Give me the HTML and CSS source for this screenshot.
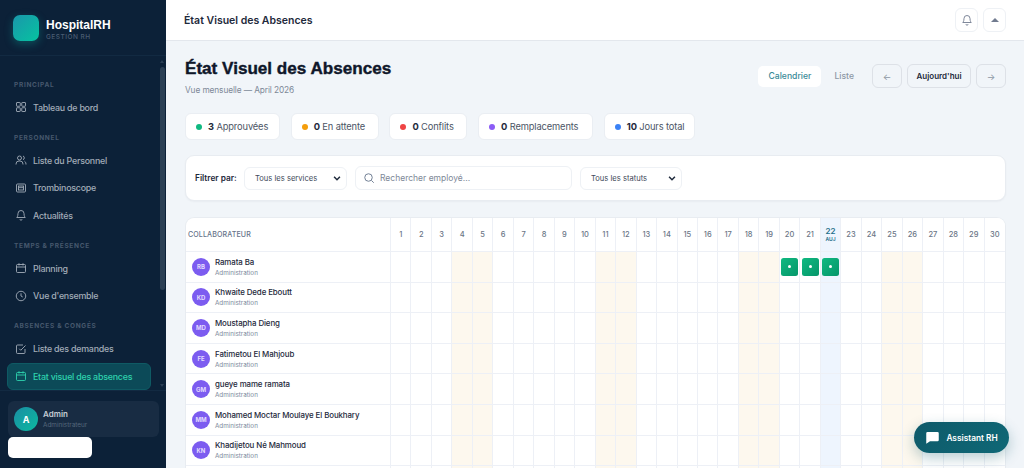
FILE: index.html
```html
<!DOCTYPE html>
<html lang="fr">

<head>
    <meta charset="UTF-8">
    <meta name="viewport" content="width=device-width, initial-scale=1.0">
    <title>État Visuel des Absences</title>
    <link rel="stylesheet" href="styles.css">
</head>

<body>
    <aside class="sidebar">
        <div class="brand">
            <div class="brand-logo"></div>
            <div class="brand-text">
                <div class="brand-name">HospitalRH</div>
                <div class="brand-sub">GESTION RH</div>
            </div>
        </div>

        <nav class="nav">
            <div class="nav-label">PRINCIPAL</div>
            <a class="nav-item">
                <svg class="nav-icon" viewBox="0 0 24 24"><rect x="3" y="3" width="7.5" height="7.5" rx="1"/><rect x="13.5" y="3" width="7.5" height="7.5" rx="1"/><rect x="3" y="13.5" width="7.5" height="7.5" rx="1"/><rect x="13.5" y="13.5" width="7.5" height="7.5" rx="1"/></svg>
                Tableau de bord
            </a>

            <div class="nav-label">PERSONNEL</div>
            <a class="nav-item">
                <svg class="nav-icon" viewBox="0 0 24 24"><circle cx="9" cy="8" r="4"/><path d="M2 21v-1a6 6 0 0 1 6-6h2a6 6 0 0 1 6 6v1"/><path d="M16 4a4 4 0 0 1 0 7.5"/><path d="M19 14.5a6 6 0 0 1 3 5.500V21"/></svg>
                Liste du Personnel
            </a>
            <a class="nav-item">
                <svg class="nav-icon" viewBox="0 0 24 24"><rect x="3" y="4" width="18" height="16" rx="2"/><rect x="7" y="8" width="10" height="8"/><circle cx="10" cy="11" r="1"/><circle cx="14" cy="11" r="1"/></svg>
                Trombinoscope
            </a>
            <a class="nav-item">
                <svg class="nav-icon" viewBox="0 0 24 24"><path d="M6 9a6 6 0 0 1 12 0c0 6 2.500 8 2.500 8h-17S6 15 6 9"/><path d="M10 20.500a2 2 0 0 0 4 0"/></svg>
                Actualités
            </a>

            <div class="nav-label">TEMPS &amp; PRÉSENCE</div>
            <a class="nav-item">
                <svg class="nav-icon" viewBox="0 0 24 24"><rect x="3" y="5" width="18" height="16" rx="2"/><path d="M3 10h18M8 2.500V7M16 2.500V7"/></svg>
                Planning
            </a>
            <a class="nav-item">
                <svg class="nav-icon" viewBox="0 0 24 24"><circle cx="12" cy="12" r="9.500"/><path d="M12 6.500V12l3.500 2"/></svg>
                Vue d'ensemble
            </a>

            <div class="nav-label">ABSENCES &amp; CONGÉS</div>
            <a class="nav-item">
                <svg class="nav-icon" viewBox="0 0 24 24"><path d="M20 12v7a2 2 0 0 1-2 2H5a2 2 0 0 1-2-2V6a2 2 0 0 1 2-2h11"/><path d="M8.500 11.500l3 3L21 5"/></svg>
                Liste des demandes
            </a>
            <a class="nav-item active">
                <svg class="nav-icon" viewBox="0 0 24 24"><rect x="3" y="5" width="18" height="16" rx="2"/><path d="M3 10h18M8 2.500V7M16 2.500V7"/></svg>
                Etat visuel des absences
            </a>

            <div class="scroll-up"></div>
            <div class="scroll-thumb"></div>
            <div class="scroll-down"></div>
        </nav>

        <div class="sidebar-foot">
            <div class="user-card">
                <div class="user-avatar">A</div>
                <div>
                    <div class="user-name">Admin</div>
                    <div class="user-role">Administrateur</div>
                </div>
            </div>
            <div class="white-pill"></div>
        </div>
    </aside>

    <div class="main">
        <header class="topbar">
            <div class="topbar-title">État Visuel des Absences</div>
            <div class="topbar-actions">
                <button class="icon-btn">
                    <svg viewBox="0 0 24 24"><path d="M6 9a6 6 0 0 1 12 0c0 6 2.500 8 2.500 8h-17S6 15 6 9"/><path d="M10 20.500a2 2 0 0 0 4 0"/></svg>
                </button>
                <button class="icon-btn"><span class="caret-up"></span></button>
            </div>
        </header>

        <main class="content">
            <div class="page-head">
                <div>
                    <h1 class="page-title">État Visuel des Absences</h1>
                    <div class="page-sub">Vue mensuelle — April 2026</div>
                </div>
                <div class="page-tools">
                    <div class="view-toggle">
                        <span class="view-tab active">Calendrier</span>
                        <span class="view-tab">Liste</span>
                    </div>
                    <div class="month-nav">
                        <button class="nav-btn arrow">←</button>
                        <button class="nav-btn today">Aujourd'hui</button>
                        <button class="nav-btn arrow">→</button>
                    </div>
                </div>
            </div>

            <div class="stats">
                <div class="stat"><span class="dot green"></span><b>3</b> Approuvées</div>
                <div class="stat"><span class="dot orange"></span><b>0</b> En attente</div>
                <div class="stat"><span class="dot red"></span><b>0</b> Conflits</div>
                <div class="stat"><span class="dot purple"></span><b>0</b> Remplacements</div>
                <div class="stat"><span class="dot blue"></span><b>10</b> Jours total</div>
            </div>

            <div class="filters">
                <span class="filter-label">Filtrer par:</span>
                <div class="select services">Tous les services<svg viewBox="0 0 12 12"><path d="M2.500 4.500L6 8l3.500-3.500"/></svg></div>
                <div class="search">
                    <svg viewBox="0 0 24 24"><circle cx="11" cy="11" r="7.500"/><path d="M17 17l4.500 4.500"/></svg>
                    Rechercher employé...
                </div>
                <div class="select statuts">Tous les statuts<svg viewBox="0 0 12 12"><path d="M2.500 4.500L6 8l3.500-3.500"/></svg></div>
            </div>

            <div class="calendar" id="calendar"></div>
        </main>
    </div>

    <button class="assistant">
        <svg viewBox="0 0 24 24"><path d="M4 3h16a2 2 0 0 1 2 2v11a2 2 0 0 1-2 2H8l-6 4V5a2 2 0 0 1 2-2z"/></svg>
        Assistant RH
    </button>

    <script src="app.js"></script>
</body>

</html>
```

FILE: styles.css
```css
* {
    box-sizing: border-box;
}

body {
    margin: 0;
    height: 100vh;
    display: flex;
    overflow: hidden;
    background: #f1f5f9;
    font-family: "Inter", "Noto Sans", sans-serif;
    color: #0f172a;
}

/* sidebar */
.sidebar {
    width: 166px;
    flex-shrink: 0;
    display: flex;
    flex-direction: column;
    background: #0c2138;
}

.brand {
    height: 56px;
    flex-shrink: 0;
    display: flex;
    align-items: center;
    gap: 7px;
    padding: 0 13px;
    border-bottom: 1px solid #122a42;
}

.brand-logo {
    width: 26px;
    height: 26px;
    border-radius: 7px;
    background: linear-gradient(135deg, #1a97ab, #06c3a0);
    box-shadow: 0 3px 9px rgba(13, 170, 160, 0.35);
}

.brand-text {
    padding-top: 3px;
}

.brand-name {
    font-family: "Liberation Sans", sans-serif;
    font-size: 12px;
    font-weight: 700;
    line-height: 15px;
    color: #fff;
}

.brand-sub {
    font-size: 6.500px;
    line-height: 8px;
    letter-spacing: 0.5px;
    color: #4a5d72;
    font-weight: 500;
}

.nav {
    position: relative;
    flex: 1;
    min-height: 0;
    padding: 12px 15px 0 7px;
}

.nav-label {
    height: 17px;
    margin: 8.500px 0 0 7px;
    font-size: 6.500px;
    line-height: 17px;
    font-weight: 700;
    letter-spacing: 0.7px;
    white-space: nowrap;
    color: #46586d;
}

.nav-item {
    height: 27.500px;
    display: flex;
    align-items: center;
    gap: 6px;
    padding: 0 0 0 8px;
    border-radius: 6px;
    font-size: 8.900px;
    letter-spacing: -0.24px;
    font-weight: 500;
    white-space: nowrap;
    color: #a3adb9;
}

.nav-item.active {
    background: #0c4a58;
    border: 1px solid #0f5a64;
    padding-left: 7px;
    color: #2ed3ae;
}

.nav-icon {
    width: 12px;
    height: 12px;
    flex-shrink: 0;
    fill: none;
    stroke: currentColor;
    stroke-width: 1.800;
}

.scroll-thumb {
    position: absolute;
    left: 160px;
    top: 11px;
    width: 5px;
    height: 223px;
    border-radius: 3px;
    background: #2b3f54;
}

.scroll-up,
.scroll-down {
    position: absolute;
    left: 160px;
    border-left: 2.500px solid transparent;
    border-right: 2.500px solid transparent;
}

.scroll-up {
    top: 4px;
    border-bottom: 3px solid #2b3f54;
}

.scroll-down {
    bottom: 3px;
    border-top: 3px solid #2b3f54;
}

.sidebar-foot {
    height: 78px;
    flex-shrink: 0;
    padding: 10px 7px 0 8px;
    border-top: 1px solid #122a42;
}

.user-card {
    height: 36px;
    display: flex;
    align-items: center;
    gap: 5px;
    padding-left: 6px;
    border-radius: 6px;
    background: #182c43;
}

.user-avatar {
    width: 24px;
    height: 24px;
    display: flex;
    align-items: center;
    justify-content: center;
    border-radius: 50%;
    background: linear-gradient(135deg, #1a8ea3, #0cb9a0);
    color: #fff;
    font-size: 9px;
    font-weight: 700;
}

.user-name {
    font-size: 8px;
    line-height: 12px;
    font-weight: 600;
    color: #c4ccd5;
}

.user-role {
    font-size: 6.400px;
    line-height: 10px;
    color: #55677b;
}

.white-pill {
    width: 84px;
    height: 21px;
    border-radius: 5px;
    background: #fff;
}

/* main column */
.main {
    flex: 1;
    min-width: 0;
    display: flex;
    flex-direction: column;
    overflow: hidden;
}

.topbar {
    height: 41px;
    flex-shrink: 0;
    display: flex;
    align-items: center;
    justify-content: space-between;
    padding: 0 18px;
    background: #fff;
    border-bottom: 1px solid #e3e7ed;
}

.topbar-title {
    font-size: 10.500px;
    font-weight: 600;
    color: #1e293b;
}

.topbar-actions {
    display: flex;
    gap: 5px;
}

.icon-btn {
    width: 23px;
    height: 24px;
    display: flex;
    align-items: center;
    justify-content: center;
    padding: 0;
    border: 1px solid #eef1f5;
    border-radius: 6px;
    background: #fff;
}

.icon-btn svg {
    width: 12px;
    height: 12px;
    fill: none;
    stroke: #717b8f;
    stroke-width: 1.800;
}

.caret-up {
    border-left: 4px solid transparent;
    border-right: 4px solid transparent;
    border-bottom: 4px solid #717b8f;
}

.content {
    flex: 1;
    min-height: 0;
    overflow: hidden;
    padding: 18px 18px 0 19px;
}

.page-head {
    height: 54px;
    display: flex;
    justify-content: space-between;
    align-items: flex-start;
}

.page-title {
    margin: 0;
    font-family: "Liberation Sans", sans-serif;
    font-size: 17.100px;
    line-height: 20px;
    font-weight: 700;
    -webkit-text-stroke: 0.4px #0f172a;
}

.page-sub {
    margin-top: 5px;
    font-size: 8.300px;
    letter-spacing: -0.1px;
    line-height: 12px;
    color: #7d8897;
}

.page-tools {
    display: flex;
    align-items: center;
    gap: 9px;
    padding-top: 5px;
}

.view-toggle {
    display: flex;
    gap: 4px;
}

.view-tab {
    height: 21px;
    display: flex;
    align-items: center;
    padding: 0 9px;
    border-radius: 5px;
    font-size: 8.600px;
    font-weight: 500;
    color: #8d97a5;
}

.view-tab.active {
    width: 63px;
    justify-content: center;
    padding: 0;
    background: #fff;
    color: #3a8a98;
}

.month-nav {
    display: flex;
    gap: 5px;
}

.nav-btn {
    height: 24px;
    padding: 0;
    border: 1px solid #dde1e7;
    border-radius: 6px;
    background: #f1f5f9;
    font-family: inherit;
}

.nav-btn.arrow {
    width: 30px;
    font-size: 9px;
    color: #8c95a3;
}

.nav-btn.today {
    width: 64px;
    font-size: 8px;
    font-weight: 600;
    color: #1e293b;
}

.stats {
    display: grid;
    grid-template-columns: 95px 88px 78px 115px 91px;
    gap: 10.700px;
}

.stat {
    height: 27px;
    display: flex;
    align-items: center;
    padding: 0 10px;
    border: 1px solid #eaeef3;
    border-radius: 6px;
    background: #fff;
    font-size: 9.300px;
    letter-spacing: -0.12px;
    color: #4b5565;
    white-space: pre;
}

.stat b {
    font-weight: 700;
    color: #1e293b;
}

.dot {
    width: 6px;
    height: 6px;
    margin-right: 6px;
    flex-shrink: 0;
    border-radius: 50%;
}

.green { background: #10b981; }
.orange { background: #f59e0b; }
.red { background: #ef4444; }
.purple { background: #8b5cf6; }
.blue { background: #3b82f6; }

.filters {
    height: 46px;
    margin-top: 15px;
    display: flex;
    align-items: center;
    padding: 0 9px;
    border: 1px solid #e8ecf1;
    border-radius: 9px;
    background: #fff;
    box-shadow: 0 1px 2px rgba(15, 23, 42, 0.04);
}

.filter-label {
    width: 49px;
    font-size: 8.300px;
    font-weight: 600;
    color: #1e293b;
}

.select {
    height: 23px;
    display: flex;
    align-items: center;
    justify-content: space-between;
    padding: 0 4px 0 10px;
    border: 1px solid #eef1f5;
    border-radius: 6px;
    font-size: 7.600px;
    color: #3f4a5a;
}

.select svg {
    width: 10px;
    height: 10px;
    fill: none;
    stroke: #1e293b;
    stroke-width: 1.800;
}

.services {
    width: 103px;
}

.statuts {
    width: 102px;
}

.search {
    width: 217px;
    height: 24px;
    margin: 0 8px;
    display: flex;
    align-items: center;
    gap: 5px;
    padding-left: 7px;
    border: 1px solid #eef1f5;
    border-radius: 6px;
    font-size: 8.500px;
    color: #7d8897;
}

.search svg {
    width: 12px;
    height: 12px;
    fill: none;
    stroke: #64748b;
    stroke-width: 1.800;
}

/* calendar */
.calendar {
    margin-top: 16px;
    display: grid;
    grid-template-columns: 205px repeat(30, 1fr);
    grid-template-rows: 34px;
    grid-auto-rows: 30.600px;
    border: 1px solid #e8ecf1;
    border-bottom: 0;
    border-radius: 9px 9px 0 0;
    background: #fff;
    overflow: hidden;
}

.cell {
    display: flex;
    align-items: center;
    justify-content: center;
    border-right: 1px solid #edf0f6;
    border-bottom: 1px solid #edf0f6;
}

.cell:nth-child(31n) {
    border-right: 0;
}

.cell.weekend {
    background: #fdf8ee;
}

.cell.today {
    background: #eef5fe;
}

.head-name {
    justify-content: flex-start;
    padding-left: 2px;
    font-size: 7.100px;
    font-weight: 500;
    letter-spacing: 0.1px;
    color: #66738a;
}

.head-day {
    flex-direction: column;
    font-size: 7.500px;
    font-weight: 500;
    color: #6b7686;
    background: #fff;
}

.head-day.today {
    color: #1f6f8b;
    font-weight: 600;
    font-size: 8px;
}

.head-day small {
    font-size: 5px;
    line-height: 7px;
}

.person {
    justify-content: flex-start;
    gap: 5px;
    padding-left: 6px;
}

.avatar {
    width: 18px;
    height: 18px;
    flex-shrink: 0;
    display: flex;
    align-items: center;
    justify-content: center;
    border-radius: 50%;
    background: #7c5cf0;
    color: #e4dcfd;
    font-size: 6px;
    font-weight: 700;
}

.person-name {
    font-size: 7.900px;
    letter-spacing: -0.1px;
    line-height: 12px;
    font-weight: 500;
    white-space: nowrap;
    color: #1e293b;
}

.person-dept {
    margin-top: 1px;
    font-size: 6.300px;
    line-height: 9px;
    color: #7d8a9c;
}

.leave {
    width: 17px;
    height: 18px;
    display: flex;
    align-items: center;
    justify-content: center;
    border-radius: 2.500px;
    background: linear-gradient(135deg, #10b981, #059669);
}

.leave::after {
    content: '';
    width: 3px;
    height: 3px;
    border-radius: 50%;
    background: #fff;
}

/* floating chat button */
.assistant {
    position: absolute;
    right: 15px;
    bottom: 15px;
    width: 95px;
    height: 31px;
    display: flex;
    align-items: center;
    justify-content: center;
    gap: 6px;
    border: 0;
    padding: 0;
    border-radius: 16px;
    background: linear-gradient(135deg, #0e5a6a, #0f6876);
    box-shadow: 0 5px 14px rgba(15, 90, 106, 0.3);
    font-family: inherit;
    font-size: 8.300px;
    font-weight: 600;
    color: #fff;
}

.assistant svg {
    width: 15px;
    height: 15px;
    fill: #fff;
}
```

FILE: app.js
```js
const employees = [
    ['RB', 'Ramata Ba'],
    ['KD', 'Khwaite Dede Eboutt'],
    ['MD', 'Moustapha Dieng'],
    ['FE', 'Fatimetou El Mahjoub'],
    ['GM', 'gueye mame ramata'],
    ['MM', 'Mohamed Moctar Moulaye El Boukhary'],
    ['KN', 'Khadijetou Né Mahmoud']
];

const weekends = [4, 5, 11, 12, 18, 19, 25, 26];
const today = 22;
const leaves = { 0: [20, 21, 22] };

function dayClass(day) {
    if (day === today) return ' today';
    return weekends.includes(day) ? ' weekend' : '';
}

let html = '<div class="cell head-name">COLLABORATEUR</div>';

for (let day = 1; day <= 30; day++) {
    const label = day === today ? `${day}<small>AUJ</small>` : day;
    html += `<div class="cell head-day${day === today ? ' today' : ''}">${label}</div>`;
}

employees.forEach(([initials, name], row) => {
    html += `<div class="cell person"><div class="avatar">${initials}</div><div>
        <div class="person-name">${name}</div><div class="person-dept">Administration</div></div></div>`;

    for (let day = 1; day <= 30; day++) {
        const onLeave = (leaves[row] || []).includes(day);
        html += `<div class="cell${dayClass(day)}">${onLeave ? '<div class="leave"></div>' : ''}</div>`;
    }
});

// last row is only a sliver at the bottom of the window
html += '<div class="cell"></div>';
for (let day = 1; day <= 30; day++) {
    html += `<div class="cell${dayClass(day)}"></div>`;
}

document.getElementById('calendar').innerHTML = html;
```
